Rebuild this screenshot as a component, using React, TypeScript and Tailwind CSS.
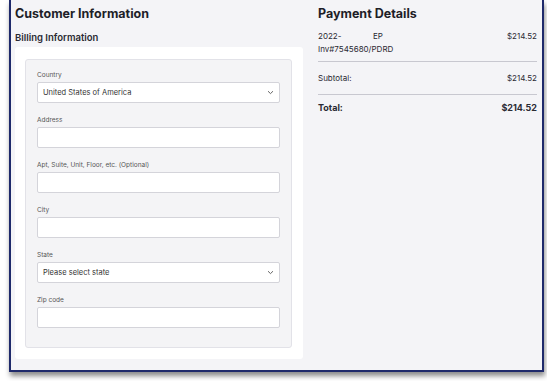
import React from "react";

const font = { fontFamily: "Inter, 'Liberation Sans', sans-serif" };

function Chevron() {
  return (
    <svg width="7" height="5" viewBox="0 0 7 5" className="shrink-0">
      <path d="M1 1.2 L3.5 3.6 L6 1.2" fill="none" stroke="#555" strokeWidth="0.9" />
    </svg>
  );
}

function Field({ label, select, value }: { label: string; select?: boolean; value?: string }) {
  return (
    <div className="flex flex-col">
      <div className="text-[6.5px] leading-[9px] text-[#555] mb-[2px]">{label}</div>
      <div className="h-[21px] bg-white border border-[#d4d4da] rounded-[2px] flex items-center justify-between px-[5px]">
        <span className="text-[7.5px] text-[#333]">{value ?? ""}</span>
        {select && <Chevron />}
      </div>
    </div>
  );
}

export default function App() {
  return (
    <div className="w-[547px] h-[381px] bg-white overflow-hidden" style={font}>
      <div className="ml-[9px] w-[535px] h-[372px] border-2 border-t-0 border-[#1f2a6b] bg-[#f4f4f7] shadow-[1px_4px_5px_rgba(0,0,0,0.45)] flex pl-[4px] pr-[4px]">
        <div className="w-[288px] flex flex-col">
          <div className="text-[12.5px] font-bold text-[#1e1e28] leading-[18px] mt-[5px]">Customer Information</div>
          <div className="text-[9.5px] font-semibold text-[#2a2a33] leading-[14px] mt-[8px]">Billing Information</div>
          <div className="mt-[2px] bg-white rounded-[3px] h-[312px] pt-[12px] pl-[10px] pr-[11px]">
            <div className="bg-[#f4f4f6] border border-[#e2e2e8] rounded-[3px] h-[289px] pt-[11px] px-[11px] flex flex-col gap-[13px]">
              <Field label="Country" select value="United States of America" />
              <Field label="Address" />
              <Field label="Apt, Suite, Unit, Floor, etc. (Optional)" />
              <Field label="City" />
              <Field label="State" select value="Please select state" />
              <Field label="Zip code" />
            </div>
          </div>
        </div>
        <div className="ml-[15px] w-[219px] flex flex-col text-[#2a2a33]">
          <div className="text-[12.5px] font-bold text-[#1e1e28] leading-[18px] mt-[5px]">Payment Details</div>
          <div className="mt-[7px] flex justify-between text-[8px] leading-[13px]">
            <div className="flex flex-col">
              <div className="flex"><span className="w-[55px]">2022-</span><span>EP</span></div>
              <span>Inv#7545680/PDRD</span>
            </div>
            <span>$214.52</span>
          </div>
          <div className="mt-[5px] border-t border-[#c8c8d0]" />
          <div className="mt-[10px] flex justify-between text-[8px] leading-[12px]">
            <span>Subtotal:</span><span>$214.52</span>
          </div>
          <div className="mt-[10px] border-t border-[#c8c8d0]" />
          <div className="mt-[7px] flex justify-between text-[9px] font-bold leading-[12px]">
            <span>Total:</span><span>$214.52</span>
          </div>
        </div>
      </div>
    </div>
  );
}
